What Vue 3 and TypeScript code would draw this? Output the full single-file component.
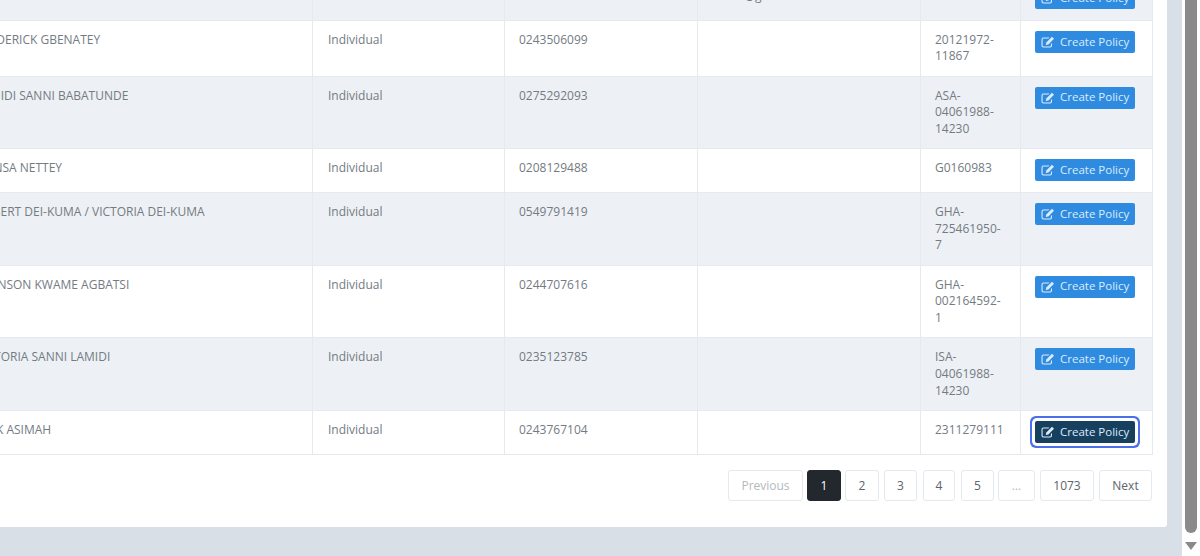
<script setup lang="ts">
interface Row { name: string; phone: string; user?: string; id: string[]; focus?: boolean }
interface Page { label: string; cls: string }
const rows: Row[] = [
  { name: 'KOFI MENSAH', phone: '0244100200', user: 'sarah@gmail.com', id: ['P1768888'] },
  { name: 'FREDERICK GBENATEY', phone: '0243506099', id: ['20121972-', '11867'] },
  { name: 'LAMIDI SANNI BABATUNDE', phone: '0275292093', id: ['ASA-', '04061988-', '14230'] },
  { name: 'MENSA NETTEY', phone: '0208129488', id: ['G0160983'] },
  { name: 'ROBERT DEI-KUMA / VICTORIA DEI-KUMA', phone: '0549791419', id: ['GHA-', '725461950-', '7'] },
  { name: 'JOHNSON KWAME AGBATSI', phone: '0244707616', id: ['GHA-', '002164592-', '1'] },
  { name: 'VICTORIA SANNI LAMIDI', phone: '0235123785', id: ['ISA-', '04061988-', '14230'] },
  { name: 'NICK ASIMAH', phone: '0243767104', id: ['2311279111'], focus: true },
]
const pages: Page[] = [
  { label: 'Previous', cls: 'prev disabled' },
  { label: '1', cls: 'active' },
  { label: '2', cls: '' },
  { label: '3', cls: 'p3' },
  { label: '4', cls: 'p4' },
  { label: '5', cls: 'p5' },
  { label: '…', cls: 'dots disabled' },
  { label: '1073', cls: 'wide' },
  { label: 'Next', cls: 'next' },
]
</script>

<template>
  <div class="viewport">
    <main class="page">
      <section class="card">
        <table class="grid">
          <colgroup>
            <col class="c-name" /><col class="c-type" /><col class="c-phone" />
            <col class="c-user" /><col class="c-id" /><col class="c-act" />
          </colgroup>
          <tbody>
            <tr v-for="r in rows" :key="r.name">
              <td class="name">{{ r.name }}</td>
              <td>Individual</td>
              <td class="tight">{{ r.phone }}</td>
              <td>{{ r.user }}</td>
              <td class="tight"><div v-for="l in r.id" :key="l">{{ l }}</div></td>
              <td class="act">
                <button class="btn" :class="{ focus: r.focus }" type="button">
                  <svg class="ico" viewBox="0 0 14 12" aria-hidden="true">
                    <path d="M11 7v2.600A1.900 1.900 0 0 1 9.100 11.500H2.400A1.900 1.900 0 0 1 .5 9.600V3.400A1.900 1.900 0 0 1 2.400 1.500H8.500L7.400 2.600H2.400a.8.8 0 0 0-.8.8v6.200a.8.8 0 0 0 .8.8h6.700a.8.8 0 0 0 .8-.8V8.100z" fill="currentColor" />
                    <path d="M11 .8 13 2.800 7.300 8.500 4.800 9 5.300 6.500z" fill="currentColor" />
                  </svg>
                  <span>Create Policy</span>
                </button>
              </td>
            </tr>
          </tbody>
        </table>
        <nav class="pager">
          <span v-for="p in pages" :key="p.label" class="pg" :class="p.cls">{{ p.label }}</span>
        </nav>
      </section>
    </main>
    <aside class="scrollbar">
      <div class="thumb"></div>
      <svg class="arrow" viewBox="0 0 12 8" aria-hidden="true"><path d="M0 0H12L6 8z" fill="#8a8a8a" /></svg>
    </aside>
  </div>
</template>

<style>
html, body { margin: 0; overflow: hidden; }
</style>

<style scoped>
.viewport {
  display: flex;
  width: 1200px;
  height: 556px;
  overflow: hidden;
  background: #d9dfe6;
  font-family: "Open Sans", "Liberation Sans", sans-serif;
  font-size: 12px;
  color: #747b82;
}
.page { flex: 1; min-width: 0; overflow: hidden; }
.card {
  width: 1222px;
  margin: -24px 0 0 -55px;
  height: 551px;
  background: #fff;
  border-radius: 3px;
  box-sizing: border-box;
  padding: 0 15px 0 0;
}
.grid {
  width: 1207px;
  table-layout: fixed;
  border-collapse: collapse;
}
.c-name { width: 367px; }
.c-type { width: 192px; }
.c-phone { width: 193px; }
.c-user { width: 223px; }
.c-id { width: 100px; }
.c-act { width: 132px; }
td {
  padding: 11px 15px 10.8px;
  border: 1px solid #e6eaef;
  vertical-align: top;
  line-height: 16.6px;
}
.name { padding-left: 30px; }
.tight { padding-left: 14px; }
.act { padding-left: 14px; }
tr:nth-child(odd) td { background: #edf1f5; }
.btn {
  display: flex;
  align-items: center;
  gap: 5px;
  width: 100px;
  height: 22px;
  margin-top: -1px;
  padding: 0 0 0 6px;
  border: 0;
  border-radius: 2px;
  background: #2f8be0;
  color: #dcebfa;
  font: inherit;
  font-size: 11.5px;
  box-sizing: border-box;
  white-space: nowrap;
}
.btn.focus {
  background: #17405f;
  box-shadow: 0 0 0 3px #fff, 0 0 0 5px #4a6fe8;
}
.ico { width: 14px; height: 12px; flex: none; }
.pager {
  display: flex;
  justify-content: flex-end;
  gap: 4px;
  margin-top: 15px;
}
.pg {
  display: flex;
  align-items: center;
  justify-content: center;
  width: 34px;
  height: 31px;
  box-sizing: border-box;
  border: 1px solid #e4e9f0;
  border-radius: 3px;
  background: #fff;
  color: #5c646c;
  font-size: 12px;
}
.prev { width: 75px; }
.p3 { width: 33px; margin-left: 1px; }
.p4 { width: 32px; margin-left: 2px; }
.p5 { width: 33px; margin-left: 2px; }
.dots { width: 37px; }
.wide { width: 54px; margin-left: 1px; }
.next { width: 53px; margin-left: 1px; }
.disabled { color: #b4b9be; }
.active { background: #23282f; border-color: #23282f; color: #fff; }
.scrollbar {
  flex: none;
  width: 18px;
  background: #fff;
  box-sizing: border-box;
  padding: 0 3px;
  display: flex;
  flex-direction: column;
  align-items: center;
}
.thumb {
  width: 12px;
  height: 533px;
  flex: none;
  background: #8a8a8a;
  border-radius: 0 0 6px 6px;
}
.arrow { width: 12px; height: 8px; margin-top: 9px; flex: none; }
</style>
